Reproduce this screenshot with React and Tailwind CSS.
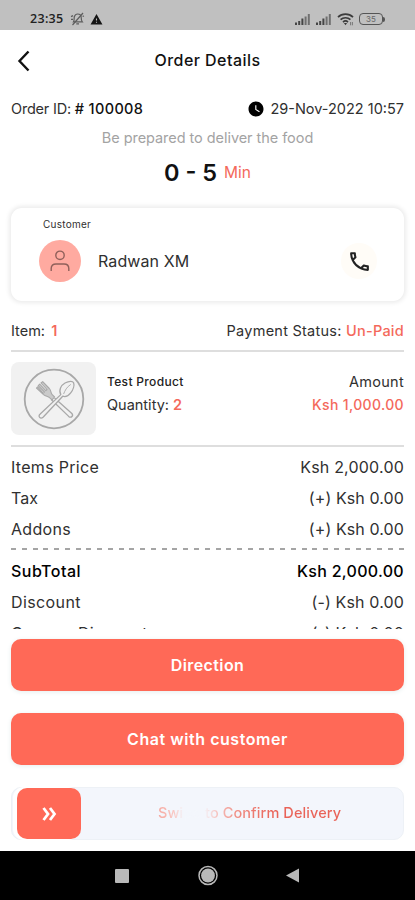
import React from "react";
import { MdOutlineCall, MdWarning, MdWatchLater } from "react-icons/md";

const priceRows = [
  { label: "Items Price", labelClass: "tracking-[0.3px]", value: "Ksh 2,000.00", valueClass: "tracking-[0.2px]" },
  { label: "Tax", labelClass: "", value: "(+) Ksh 0.00", valueClass: "tracking-[0.1px]" },
  { label: "Addons", labelClass: "tracking-[0.3px]", value: "(+) Ksh 0.00", valueClass: "tracking-[0.1px]" },
];

const totalRows = [
  { label: "SubTotal", labelClass: "font-medium text-black tracking-[0.5px]", value: "Ksh 2,000.00", valueClass: "font-medium text-black tracking-[0.3px]" },
  { label: "Discount", labelClass: "tracking-[0.4px]", value: "(-) Ksh 0.00", valueClass: "tracking-[0.15px]" },
  { label: "Coupon Discount", labelClass: "tracking-[0.4px]", value: "(-) Ksh 0.00", valueClass: "tracking-[0.15px]" },
];

const SignalIcon = () => (
  <svg width="17" height="12" viewBox="0 0 17 12" fill="none" strokeWidth="2">
    <path d="M2 12V9.5M5.2 12V8M8.4 12V5.5" stroke="#454545" />
    <path d="M11.6 12V3.5M14.8 12V1" stroke="#707070" />
  </svg>
);

const MutedBellIcon = () => (
  <svg width="15" height="14" viewBox="0 0 15 14" fill="none" stroke="#5c5c5c" strokeWidth="1.2">
    <path d="M3.5 9.8C4.6 8.2 3.8 6.4 4.4 4.5C5 2.7 6.4 2 7.7 2C9.8 2 11.2 3.6 11.2 5.6C11.2 7.6 11.3 8.6 12.3 9.8Z" />
    <path d="M6.3 11.8H9M13 1L2.5 13M1 4.6L3 3.6M1 7.4H3M12.6 4.4L14 4" />
  </svg>
);

const WifiIcon = () => (
  <svg width="17" height="13" viewBox="0 0 17 13" fill="none" stroke="#3b3b3b" strokeWidth="1.7">
    <path d="M1 4.2C5 0.2 12 0.2 16 4.2M3.6 6.7C6.2 4.1 10.8 4.1 13.4 6.7M6 9.1C7.5 7.7 9.5 7.7 11 9.1" />
    <path d="M6.9 10L8.5 12.2L10.1 10Z" fill="#3b3b3b" stroke="none" />
    <path d="M13.6 9V12.3M15.4 9V12.3" stroke="#777" strokeWidth="1" />
  </svg>
);

const PlateIcon = () => (
  <svg width="62" height="62" viewBox="0 0 62 62" fill="none" stroke="#a8a8a8" strokeLinejoin="round">
    <circle cx="31" cy="31" r="29.3" strokeWidth="1.8" />
    {/* fork */}
    <path d="M31.5 30L48.6 45.2C51 47.5 48.2 50.7 45.7 48.4L28.2 31.5" strokeWidth="1.3" />
    <path d="M13.5 20L20.5 26.6C22.8 28.6 25 27.9 26.8 29.8L29 31.8L31.6 29L29.2 26.7C27.5 25 28.4 22.8 26.3 20.5L19.7 13.6L18 15L24 21.5L22.8 22.6L16.7 16.2L15.2 17.6L21.4 24L20.2 25.2L14.6 18.8Z" fill="#cacaca" strokeWidth="1.1" />
    {/* spoon */}
    <path d="M17.2 46L37.8 26.6C35.4 22.5 38 17.2 42 15C46.5 12.7 49.8 13.2 50.6 14.7C51.6 17.3 50.2 21.8 47.7 24.8C45.5 27.7 42.3 29.2 39.7 28.2L20.3 49C17.4 51.6 14.4 48.5 17.2 46Z" fill="#f1f1f1" strokeWidth="1.3" />
    <path d="M40.6 26C42 22.4 43.8 19 47.8 16.4" strokeWidth="0.9" />
  </svg>
);

const PriceRow = ({ row }) => (
  <div className="flex h-[31px] shrink-0 items-center justify-between text-[#303030]">
    <span className={row.labelClass}>{row.label}</span>
    <span className={row.valueClass}>{row.value}</span>
  </div>
);

const App = () => {
  return (
    <div className="flex h-[900px] w-[415px] flex-col overflow-hidden whitespace-nowrap bg-white font-['Inter',sans-serif] text-[16px] leading-none text-[#303030]">
      {/* Status bar */}
      <div className="flex h-[30px] shrink-0 items-center bg-[#c0c0c0] pt-2 pr-[30px] pl-[30px]">
        <span className="w-[40px] font-['Open_Sans',sans-serif] text-[12.5px] font-semibold tracking-[0.3px] text-[#222]">23:35</span>
        <MutedBellIcon />
        <MdWarning className="ml-[5px] size-[13px] text-[#151515]" />
        <div className="ml-auto flex items-center">
          <SignalIcon />
          <div className="ml-[4px] flex">
            <SignalIcon />
          </div>
          <div className="ml-[5px] flex">
            <WifiIcon />
          </div>
          <div className="ml-[5px] flex h-[12px] w-[24px] items-center justify-center rounded-[4px] border-[1.5px] border-[#555] text-[8px] text-[#666]">
            35
          </div>
          <div className="h-[5px] w-[2px] rounded-r bg-[#555]" />
        </div>
      </div>

      {/* Header */}
      <div className="grid h-[61px] shrink-0 grid-cols-[60px_1fr_60px] items-center">
        <svg className="ml-[17px]" width="13" height="22" viewBox="0 0 13 22" fill="none" stroke="#111" strokeWidth="2.4">
          <path d="M11.5 1.5L2.5 11L11.5 20.5" />
        </svg>
        <h1 className="pb-[2px] text-center text-[16px] font-medium tracking-[0.45px] text-[#111]">Order Details</h1>
      </div>

      <div className="flex h-[538px] shrink-0 flex-col overflow-hidden px-[11px]">
        <div className="flex h-[36px] shrink-0 items-center justify-between text-[14.5px]">
          <p className="tracking-[-0.2px]">
            Order ID: <span className="font-medium tracking-[0.35px] text-[#111]"># 100008</span>
          </p>
          <div className="flex items-center gap-[5px]">
            <MdWatchLater className="size-[18px] text-black" />
            <span>29-Nov-2022 10:57</span>
          </div>
        </div>
        <p className="mt-px h-[19px] shrink-0 text-center text-[14.5px] leading-[19px] tracking-[-0.05px] text-[#a3a3a3]">
          Be prepared to deliver the food
        </p>
        <div className="mt-[11px] flex h-[30px] shrink-0 items-center justify-center gap-[7px]">
          <span className="text-[23.5px] font-semibold text-[#111]">0 - 5</span>
          <span className="pb-px text-[15.5px] text-[#f4695b]">Min</span>
        </div>

        {/* Customer card */}
        <div className="mt-[20px] h-[93px] shrink-0 rounded-[11px] bg-white px-[28px] pt-[10px] shadow-[0_0_4px_2px_#ececec]">
          <p className="pl-[4px] text-[10px] leading-[12px] tracking-[0.25px]">Customer</p>
          <div className="mt-[10px] flex h-[42px] items-center">
            <div className="flex size-[42px] items-center justify-center rounded-full bg-[#ffaaa0]">
              <svg width="20" height="22" viewBox="0 0 20 22" fill="none" stroke="#90605a" strokeWidth="1.4">
                <circle cx="10" cy="5.3" r="4.2" />
                <path d="M1.2 21V18.5C1.2 15.5 3 14 6 14H14C17 14 18.8 15.5 18.8 18.5V21" />
              </svg>
            </div>
            <span className="ml-[17px] text-[16px] tracking-[0.1px]">Radwan XM</span>
            <div className="mr-[-1px] ml-auto flex size-[36px] items-center justify-center rounded-full bg-[#fffcf7]">
              <MdOutlineCall className="size-[25px] text-[#222]" />
            </div>
          </div>
        </div>

        <div className="mt-[11px] flex h-[38px] shrink-0 items-center justify-between pt-px text-[14.5px]">
          <p>
            Item: <span className="ml-[2px] font-semibold text-[#f4695b]">1</span>
          </p>
          <p className="tracking-[0.25px]">
            Payment Status: <span className="font-medium text-[#f4695b]">Un-Paid</span>
          </p>
        </div>

        {/* Product */}
        <div className="flex h-[97px] shrink-0 items-start border-y-2 border-[#dedede] pt-[10px]">
          <div className="flex h-[73px] w-[85px] items-center justify-center rounded-[8px] bg-[#f1f1f1]">
            <PlateIcon />
          </div>
          <div className="ml-[11px] pt-[11px]">
            <p className="h-[23px] text-[12px] leading-[18px] font-medium tracking-[0.33px] text-[#222]">Test Product</p>
            <p className="text-[14.5px] leading-[18px]">
              Quantity: <span className="font-semibold text-[#f4695b]">2</span>
            </p>
          </div>
          <div className="ml-auto pt-[11px] text-right">
            <p className="h-[23px] text-[14.5px] leading-[18px] tracking-[0.3px]">Amount</p>
            <p className="text-[14px] leading-[18px] font-medium tracking-[0.35px] text-[#f4695b]">Ksh 1,000.00</p>
          </div>
        </div>

        {/* Price breakdown */}
        <div className="mt-[4px] flex shrink-0 flex-col">
          {priceRows.map((row) => (
            <PriceRow key={row.label} row={row} />
          ))}
          <div className="mt-[4px] mb-[5px] flex h-[2px] justify-between">
            {Array.from({ length: 37 }, (_, i) => (
              <span key={i} className="h-[2px] w-[5px] bg-[#a5a5a5]" />
            ))}
          </div>
          {totalRows.map((row) => (
            <PriceRow key={row.label} row={row} />
          ))}
        </div>
      </div>

      {/* Actions */}
      <div className="flex h-[222px] shrink-0 flex-col px-[11px] pt-[10px]">
        <button className="h-[52px] shrink-0 rounded-[10px] bg-[#ff6957] pb-px text-[16px] font-semibold tracking-[0.4px] text-white shadow-[0_1px_5px_#e6eeee]">
          Direction
        </button>
        <button className="mt-[22px] h-[52px] shrink-0 rounded-[10px] bg-[#ff6957] pb-px text-[16px] font-semibold tracking-[0.55px] text-white shadow-[0_1px_5px_#e6eeee]">
          Chat with customer
        </button>
        <div className="mt-[22px] flex h-[53px] shrink-0 items-center rounded-[10px] border border-[#edf1f6] bg-[#f3f6fc] pl-[5px]">
          <div className="flex h-[51px] w-[64px] items-center justify-center rounded-[10px] bg-[#ff6957] shadow-[-3px_0_0_1px_#fff]">
            <svg width="15" height="14" viewBox="0 0 15 14" fill="none" stroke="#fff" strokeWidth="2.8">
              <path d="M1.5 1L6 7L1.5 13M8 1L12.5 7L8 13" />
            </svg>
          </div>
          <span className="mb-[2px] ml-[77px] bg-[linear-gradient(90deg,#f6a79e_0%,#f8c9c5_9%,#f3f6fc_14%,#f3f6fc_25%,#f6c5c1_32%,#ef897f_44%,#e96358_65%,#e96358_100%)] bg-clip-text text-[14.5px] leading-[20px] font-medium tracking-[0.1px] text-transparent">
            Swipe to Confirm Delivery
          </span>
        </div>
      </div>

      {/* System navigation */}
      <div className="h-[49px] shrink-0 bg-black">
        <svg width="415" height="49" viewBox="0 0 415 49" fill="#b9b9b9">
          <rect x="115" y="18" width="14" height="14" rx="1" />
          <circle cx="208" cy="24.5" r="6.9" />
          <circle cx="208" cy="24.5" r="9" fill="none" stroke="#b9b9b9" strokeWidth="1.5" />
          <path d="M286 24.5L299 17.5V31.5Z" />
        </svg>
      </div>
    </div>
  );
};

export default App;
